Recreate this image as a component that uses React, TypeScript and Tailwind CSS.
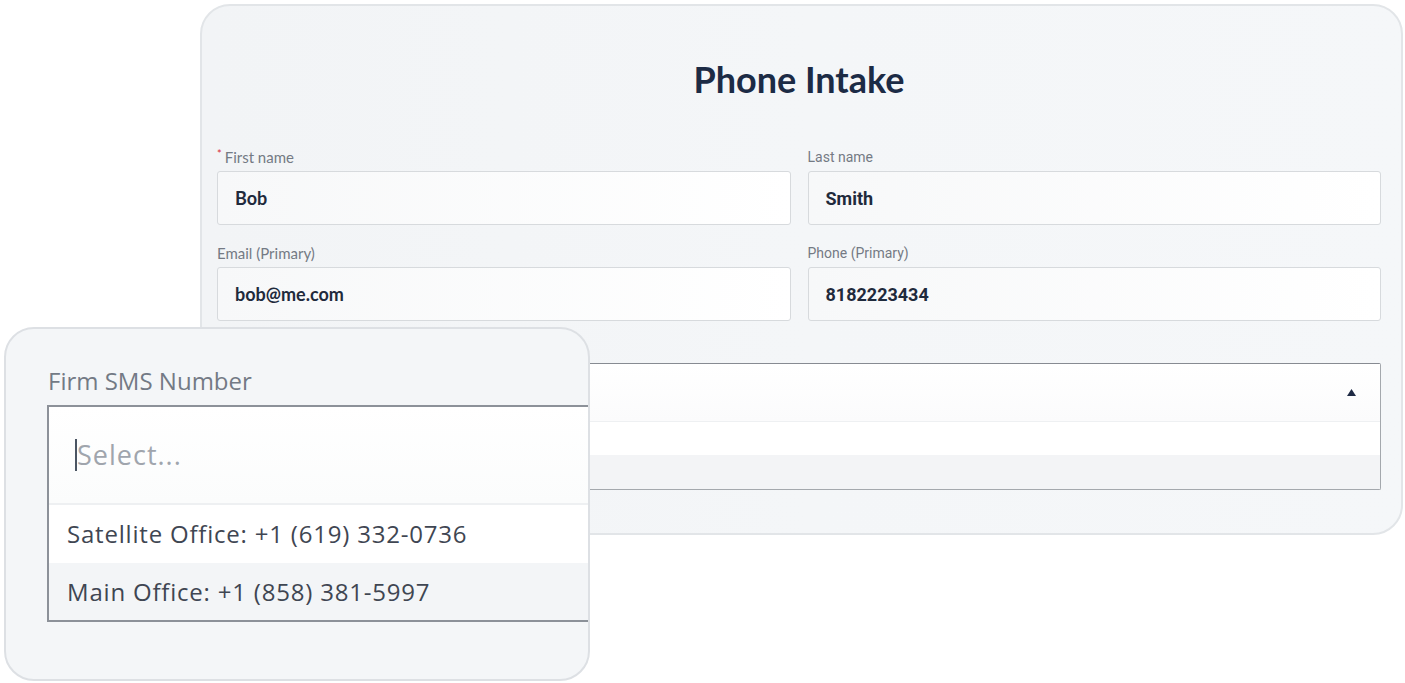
import React from 'react';

const lato = { fontFamily: 'Lato, "Open Sans", sans-serif' };

type Field = { label: string; value: string; required?: boolean; right?: boolean };

const fields: Field[] = [
  { label: 'First name', value: 'Bob', required: true },
  { label: 'Last name', value: 'Smith', right: true },
  { label: 'Email (Primary)', value: 'bob@me.com' },
  { label: 'Phone (Primary)', value: '8182223434', right: true },
];

const FieldBox: React.FC<{ field: Field }> = ({ field }) => {
  const font = field.right
    ? 'font-["Roboto",sans-serif] text-[14px]'
    : 'font-["Lato",sans-serif] text-[15px]';
  return (
    <div className="flex flex-col">
      <label className={`${font} leading-[18px] h-[18px] mb-[5px] text-[#747a84] flex items-start`}>
        {field.required && <span className="text-[#d92d3a] text-[11px] leading-[12px] mr-[3px]">*</span>}
        {field.label}
      </label>
      <div className="h-[54px] rounded-[3px] border-[1.5px] border-[#d7dadd] bg-gradient-to-r from-[#f7f8f9] to-white flex items-center px-[17px]">
        <span
          className={
            field.right
              ? 'font-["Roboto",sans-serif] font-bold text-[18px] text-[#1f2a3c]'
              : 'font-["Lato",sans-serif] font-bold text-[18px] text-[#1f2a3c]'
          }
        >
          {field.value}
        </span>
      </div>
    </div>
  );
};

const SmsOverlay: React.FC = () => (
  <div className="absolute left-[4px] top-[327px] w-[586px] h-[354px] rounded-[30px] border-2 border-[#dde0e4] bg-[#f4f6f8] overflow-hidden pl-[41px] pt-[37px]">
    <div className='font-["Open_Sans",sans-serif] text-[24px] leading-[30px] text-[#737a85] mb-[9px] pl-[1px]'>
      Firm SMS Number
    </div>
    <div className="w-[600px] border-t-2 border-l-2 border-b-2 border-[#8c9199] bg-white">
      <div className="h-[96px] flex items-center pl-[26px] bg-gradient-to-b from-white to-[#fbfcfc]">
        <span className="w-[2px] h-[32px] bg-[#4b5563]" />
        <span className='font-["Open_Sans",sans-serif] text-[27px] tracking-[1px] text-[#a0a5ad]'>Select...</span>
      </div>
      <div className="h-[2px] bg-[#eef0f2]" />
      <div className='h-[58px] flex items-center pl-[18px] font-["Open_Sans",sans-serif] text-[24px] tracking-[0.8px] text-[#3f4652]'>
        Satellite Office: +1 (619) 332-0736
      </div>
      <div className='h-[57px] flex items-center pl-[18px] bg-[#f3f5f7] font-["Open_Sans",sans-serif] text-[24px] tracking-[0.8px] text-[#3f4652]'>
        Main Office: +1 (858) 381-5997
      </div>
    </div>
  </div>
);

export default function App() {
  return (
    <div className="relative w-[1405px] h-[683px] bg-white overflow-hidden">
      <div className="ml-[200px] mt-[4px] w-[1203px] h-[531px] rounded-[30px] border-2 border-[#e2e5e8] bg-gradient-to-r from-[#f2f4f6] via-[#f4f6f8] to-[#f5f7f9] pl-[15px] pr-[20px] pt-[51px]">
        <h1 className="text-center text-[36px] leading-[44px] font-bold text-[#1c2b45]" style={lato}>
          Phone Intake
        </h1>

        <div className="grid grid-cols-2 gap-x-[17px] gap-y-[19px] mt-[47px]">
          {fields.map((f) => (
            <FieldBox key={f.label} field={f} />
          ))}
        </div>

        <div className="mt-[16px]">
          <div className='font-["Lato",sans-serif] text-[15px] leading-[18px] h-[18px] mb-[8px] text-[#6b7280]'>
            Firm SMS Number
          </div>
          <div className="border border-[#a4a8ad] border-t-[#878b92] rounded-[2px] bg-white">
            <div className="h-[57px] flex items-center justify-end pr-[24px] bg-gradient-to-b from-white to-[#fbfbfc]">
              <svg width="9" height="7" viewBox="0 0 9 7">
                <polygon points="4.5,0 9,7 0,7" fill="#1e2a44" />
              </svg>
            </div>
            <div className="h-px bg-[#eef0f2]" />
            <div className="h-[33px] bg-white" />
            <div className="h-[34px] bg-[#f3f4f6]" />
          </div>
        </div>
      </div>

      <SmsOverlay />
    </div>
  );
}
